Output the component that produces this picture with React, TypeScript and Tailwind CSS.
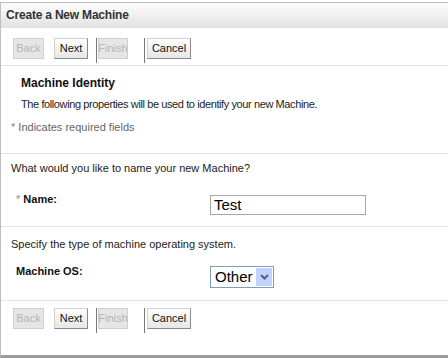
import React from "react";

const font = { fontFamily: "'Liberation Sans', Arial, sans-serif" };

function Btn({ label, disabled, w }: { label: string; disabled?: boolean; w: string }) {
  return (
    <div
      className={
        "h-[21px] flex items-center justify-center text-[11px] border " +
        w +
        " " +
        (disabled
          ? "bg-[#e6e6e6] border-[#cfcfcf] text-[#b5b5b5]"
          : "bg-gradient-to-b from-[#ffffff] to-[#e6e6e6] border-t-[#d0d0d0] border-l-[#d0d0d0] border-r-[#8a8a8a] border-b-[#8a8a8a] text-[#111]")
      }
    >
      {label}
    </div>
  );
}

function Buttons() {
  return (
    <div className="flex items-start h-[26px] pl-[12px]">
      <Btn label="Back" disabled w="w-[31px]" />
      <div className="w-[10px]" />
      <Btn label="Next" w="w-[34px]" />
      <div className="w-[8px]" />
      <div className="w-px h-[25px] bg-[#777]" />
      <div className="w-[1px]" />
      <Btn label="Finish" disabled w="w-[30px]" />
      <div className="w-[16px]" />
      <div className="w-px h-[25px] bg-[#777]" />
      <div className="w-[2px]" />
      <Btn label="Cancel" w="w-[44px]" />
    </div>
  );
}

export default function App() {
  return (
    <div className="w-[448px] h-[358px] bg-white overflow-hidden text-[#222]" style={font}>
      <div className="mt-[2px] h-[356px] border-t border-l border-[#bdbdbd] border-b-[3px] border-b-[#9a9a9a] flex flex-col">
        <div className="h-[25px] bg-gradient-to-b from-[#fbfbfb] via-[#f1f1f1] to-[#e2e2e2] border-b border-[#e0e0e0] flex items-center pl-[5px] text-[12px] font-bold text-[#333] tracking-[-0.2px]">
          Create a New Machine
        </div>
        <div className="pt-[10px]">
          <Buttons />
        </div>
        <div className="h-px bg-[#e4e4e4] mt-[1px]" />
        <div className="pl-[20px] pt-[10px] text-[12px] leading-[15px] font-bold text-[#111]">Machine Identity</div>
        <div className="pl-[20px] pt-[6px] text-[11px] leading-[15px] text-[#222] tracking-[-0.4px]">
          The following properties will be used to identify your new Machine.
        </div>
        <div className="pl-[10px] pt-[8px] text-[11px] leading-[15px] text-[#666]">
          <span className="text-[#888]">*</span> Indicates required fields
        </div>
        <div className="h-px bg-[#e4e4e4] mt-[18px]" />
        <div className="pl-[10px] pt-[7px] text-[11px] leading-[15px] text-[#222]">What would you like to name your new Machine?</div>
        <div className="flex items-start pt-[16px]">
          <div className="w-[209px] pl-[15px] text-[11px] leading-[15px] font-bold text-[#111]">
            <span className="font-normal text-[#888]">*</span> Name:
          </div>
          <div className="w-[156px] h-[20px] border border-[#a8a8a8] flex items-center pl-[3px] text-[15px] text-black mt-[3px]">
            Test
          </div>
        </div>
        <div className="h-px bg-[#e4e4e4] mt-[11px]" />
        <div className="pl-[10px] pt-[10px] text-[11px] leading-[15px] text-[#222]">Specify the type of machine operating system.</div>
        <div className="flex items-start pt-[12px]">
          <div className="w-[209px] pl-[15px] text-[11px] leading-[15px] font-bold text-[#111]">Machine OS:</div>
          <div className="w-[64px] h-[22px] border border-[#7f9db9] flex items-center pl-[4px] text-[15px] text-black mt-[2px]">
            <span className="flex-1">Other</span>
            <div className="w-[16px] h-[18px] mr-[1px] bg-[#c1d3fb] flex items-center justify-center">
              <svg width="9" height="6" viewBox="0 0 9 6">
                <path d="M1 1 L4.5 4.5 L8 1" stroke="#4d6185" strokeWidth="2" fill="none" />
              </svg>
            </div>
          </div>
        </div>
        <div className="h-px bg-[#e4e4e4] mt-[12px]" />
        <div className="pt-[7px]">
          <Buttons />
        </div>
      </div>
    </div>
  );
}
